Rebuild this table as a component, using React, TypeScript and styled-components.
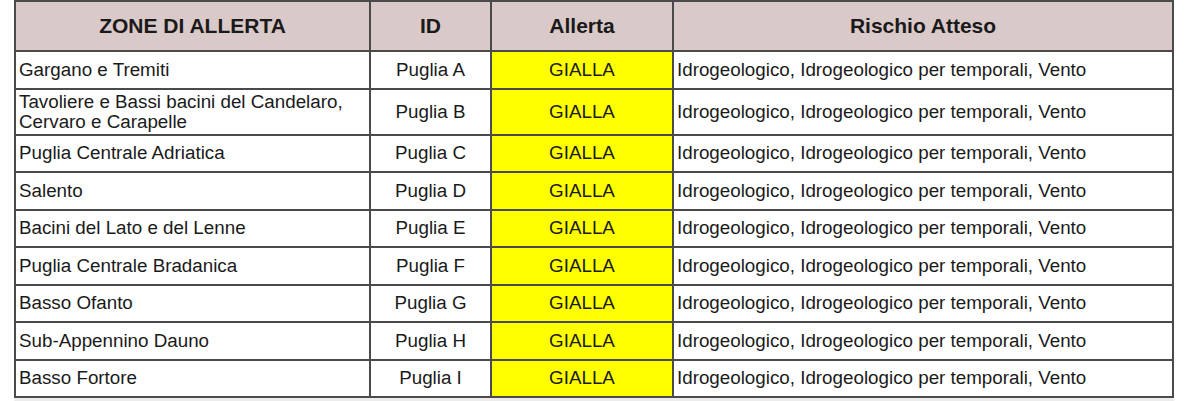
import React from 'react';
import styled, { createGlobalStyle } from 'styled-components';

const GlobalStyle = createGlobalStyle`
  html, body {
    margin: 0;
    padding: 0;
    background: #ffffff;
  }
  body {
    font-family: 'Liberation Sans', Arial, sans-serif;
  }
`;

const Page = styled.div`
  padding: 0 0 0 14px;
  width: 1186px;
  height: 401px;
  box-sizing: border-box;
  overflow: hidden;
`;

const Table = styled.table`
  width: 1158px;
  border-collapse: collapse;
  table-layout: fixed;
  color: #1a1a1a;
  font-size: 18.8px;
  box-shadow: 0 3px 0 #ececec;
`;

const HeadCell = styled.th`
  background: #dac9c9;
  border: 2px solid #4a4a4a;
  height: 50px;
  padding: 0;
  font-size: 21px;
  font-weight: bold;
  text-align: center;
  vertical-align: middle;
  box-sizing: border-box;
`;

const Row = styled.tr<{ $tall?: boolean }>`
  height: ${(p) => (p.$tall ? '46px' : '37.5px')};
`;

const Cell = styled.td<{ $align?: 'left' | 'center'; $alert?: boolean }>`
  border: 2px solid #4a4a4a;
  padding: 0 3px;
  line-height: 20px;
  text-align: ${(p) => p.$align ?? 'left'};
  vertical-align: middle;
  background: ${(p) => (p.$alert ? '#ffff00' : '#ffffff')};
  white-space: nowrap;
`;

const columns = [
  { label: 'ZONE DI ALLERTA', width: 355 },
  { label: 'ID', width: 121 },
  { label: 'Allerta', width: 182 },
  { label: 'Rischio Atteso', width: 500 },
];

const risk = 'Idrogeologico, Idrogeologico per temporali, Vento';

const zones = [
  { name: ['Gargano e Tremiti'], id: 'Puglia A' },
  {
    name: ['Tavoliere e Bassi bacini del Candelaro,', 'Cervaro e Carapelle'],
    id: 'Puglia B',
  },
  { name: ['Puglia Centrale Adriatica'], id: 'Puglia C' },
  { name: ['Salento'], id: 'Puglia D' },
  { name: ['Bacini del Lato e del Lenne'], id: 'Puglia E' },
  { name: ['Puglia Centrale Bradanica'], id: 'Puglia F' },
  { name: ['Basso Ofanto'], id: 'Puglia G' },
  { name: ['Sub-Appennino Dauno'], id: 'Puglia H' },
  { name: ['Basso Fortore'], id: 'Puglia I' },
];

export default function App() {
  return (
    <Page>
      <GlobalStyle />
      <Table>
        <colgroup>
          {columns.map((c) => (
            <col key={c.label} style={{ width: c.width }} />
          ))}
        </colgroup>
        <thead>
          <tr>
            {columns.map((c) => (
              <HeadCell key={c.label}>{c.label}</HeadCell>
            ))}
          </tr>
        </thead>
        <tbody>
          {zones.map((z) => (
            <Row key={z.id} $tall={z.name.length > 1}>
              <Cell>
                {z.name.map((line, i) => (
                  <React.Fragment key={line}>
                    {i > 0 && <br />}
                    {line}
                  </React.Fragment>
                ))}
              </Cell>
              <Cell $align="center">{z.id}</Cell>
              <Cell $align="center" $alert>
                GIALLA
              </Cell>
              <Cell>{risk}</Cell>
            </Row>
          ))}
        </tbody>
      </Table>
    </Page>
  );
}
